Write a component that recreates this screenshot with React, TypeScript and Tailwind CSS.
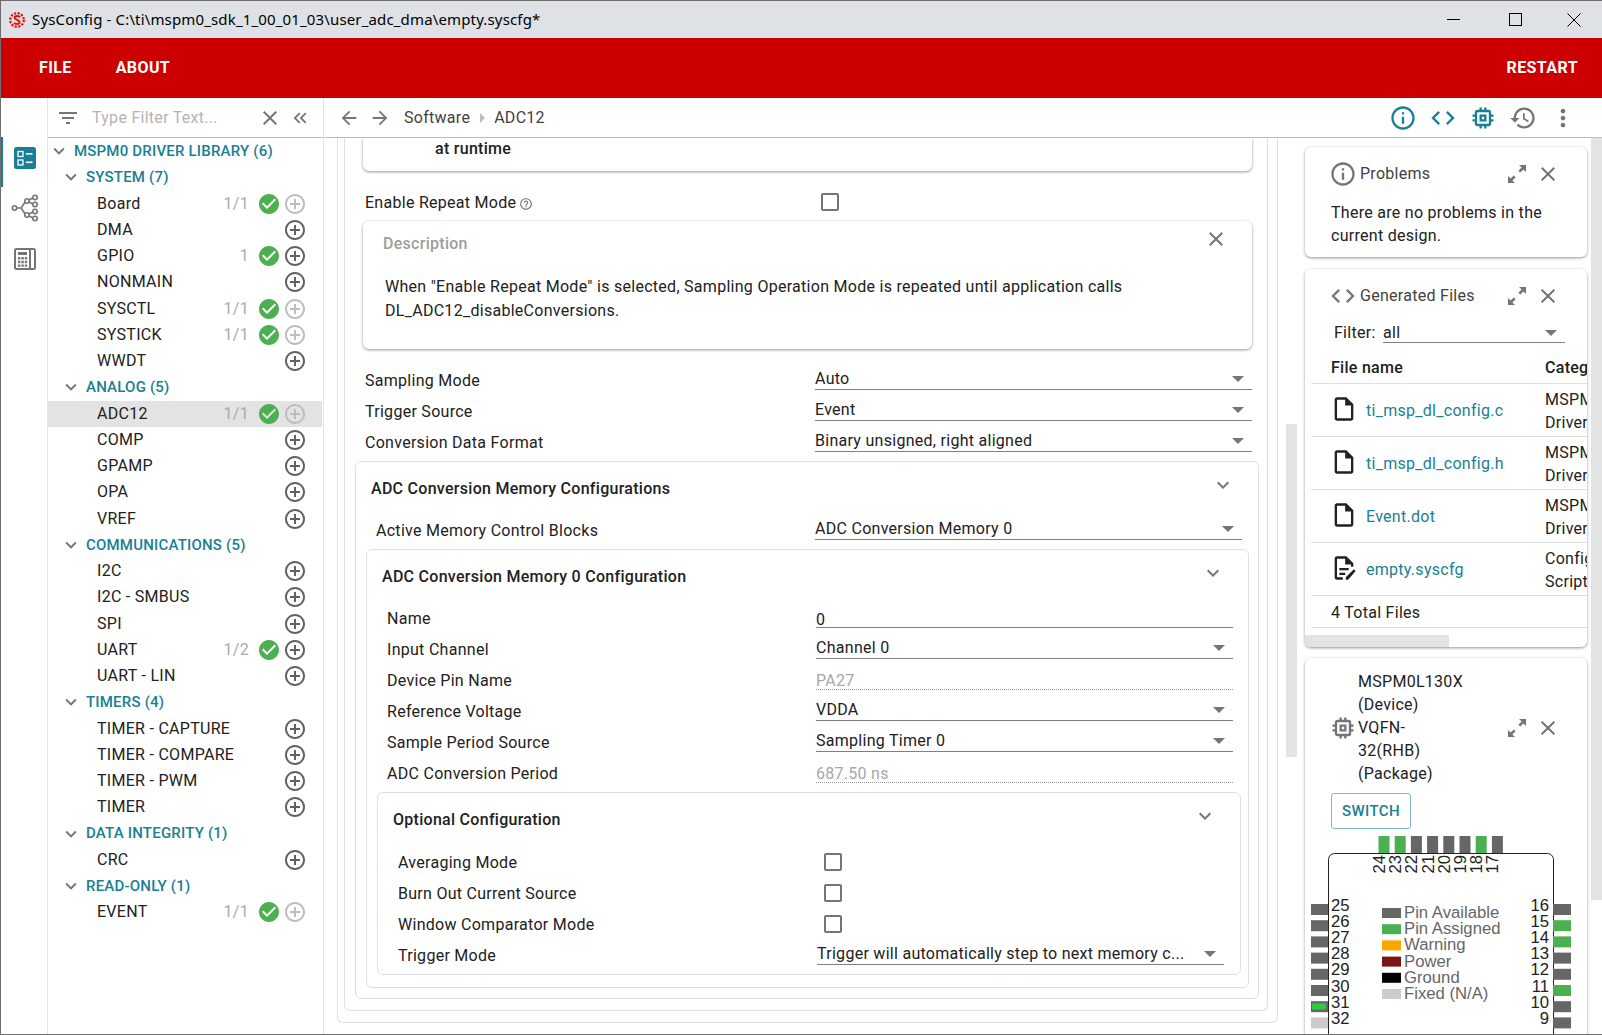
import React from 'react';

const P = {
  filter: 'M10 18h4v-2h-4v2zM3 6v2h18V6H3zm3 7h12v-2H6v2z',
  close: 'M19 6.41L17.59 5 12 10.59 6.41 5 5 6.41 10.59 12 5 17.59 6.41 19 12 13.41 17.59 19 19 17.59 13.41 12z',
  dbl: 'M17.59 18L19 16.59 14.42 12 19 7.41 17.59 6l-6 6zM11 18l1.41-1.41L7.83 12l4.58-4.59L11 6l-6 6z',
  chevron: 'M16.59 8.59L12 13.17 7.41 8.59 6 10l6 6 6-6z',
  check: 'M12 2C6.48 2 2 6.48 2 12s4.48 10 10 10 10-4.48 10-10S17.52 2 12 2zm-2 15l-5-5 1.41-1.41L10 14.17l7.59-7.59L19 8l-9 9z',
  add: 'M13 7h-2v4H7v2h4v4h2v-4h4v-2h-4V7zm-1-5C6.48 2 2 6.48 2 12s4.48 10 10 10 10-4.48 10-10S17.52 2 12 2zm0 18c-4.41 0-8-3.59-8-8s3.59-8 8-8 8 3.59 8 8-3.59 8-8 8z',
  info: 'M11 7h2v2h-2zm0 4h2v6h-2zm1-9C6.48 2 2 6.48 2 12s4.48 10 10 10 10-4.48 10-10S17.52 2 12 2zm0 18c-4.41 0-8-3.59-8-8s3.59-8 8-8 8 3.59 8 8-3.59 8-8 8z',
  code: 'M9.4 16.6L4.8 12l4.6-4.6L8 6l-6 6 6 6 1.4-1.4zm5.2 0l4.6-4.6-4.6-4.6L16 6l6 6-6 6-1.4-1.4z',
  memory: 'M15 9H9v6h6V9zm-2 4h-2v-2h2v2zm8-2V9h-2V7c0-1.1-.9-2-2-2h-2V3h-2v2h-2V3H9v2H7c-1.1 0-2 .9-2 2v2H3v2h2v2H3v2h2v2c0 1.1.9 2 2 2h2v2h2v-2h2v2h2v-2h2c1.1 0 2-.9 2-2v-2h2v-2h-2v-2h2zm-4 6H7V7h10v10z',
  history: 'M13 3c-4.97 0-9 4.03-9 9H1l3.89 3.89.07.14L9 12H6c0-3.87 3.13-7 7-7s7 3.13 7 7-3.13 7-7 7c-1.93 0-3.68-.79-4.94-2.06l-1.42 1.42C8.27 19.99 10.51 21 13 21c4.97 0 9-4.03 9-9s-4.03-9-9-9zm-1 5v5l4.28 2.54.72-1.21-3.5-2.08V8H12z',
  more: 'M12 8c1.1 0 2-.9 2-2s-.9-2-2-2-2 .9-2 2 .9 2 2 2zm0 2c-1.1 0-2 .9-2 2s.9 2 2 2 2-.9 2-2-.9-2-2-2zm0 6c-1.1 0-2 .9-2 2s.9 2 2 2 2-.9 2-2-.9-2-2-2z',
  back: 'M20 11H7.83l5.59-5.59L12 4l-8 8 8 8 1.41-1.41L7.83 13H20v-2z',
  forward: 'M12 4l-1.41 1.41L16.17 11H4v2h12.17l-5.58 5.59L12 20l8-8z',
  expand: 'M14 3h7v7l-2.6-2.6-3.2 3.2-1.8-1.8 3.2-3.2zM10 21H3v-7l2.6 2.6 3.2-3.2 1.8 1.8-3.2 3.2z',
  file: 'M14 2H6c-1.1 0-2 .9-2 2v16c0 1.1.9 2 2 2h12c1.1 0 2-.9 2-2V8l-6-6zm4 18H6V4h7v5h5v11z',
  script: 'M14 2H6c-1.1 0-2 .9-2 2v16c0 1.1.9 2 2 2h5v-2H6V4h7v5h5v2h2V8l-6-6zM8 12h8v2H8zm0 4h5v2H8zM22 14.5l-1.5-1.5-7 7V22h2z',
  help: 'M11 18h2v-2h-2v2zm1-16C6.48 2 2 6.48 2 12s4.48 10 10 10 10-4.48 10-10S17.52 2 12 2zm0 18c-4.41 0-8-3.59-8-8s3.59-8 8-8 8 3.59 8 8-3.59 8-8 8zm0-14c-2.21 0-4 1.79-4 4h2c0-1.1.9-2 2-2s2 .9 2 2c0 2-3 1.75-3 5h2c0-2.25 3-2.5 3-5 0-2.21-1.79-4-4-4z',
};

const Icon = ({ d, className }: { d: string; className: string }) => (
  <svg viewBox="0 0 24 24" fill="currentColor" className={className}>
    <path d={d} />
  </svg>
);

type Item = { label: string; count?: string; check?: boolean; dim?: boolean; selected?: boolean };
type Group = { title: string; items: Item[] };

const groups: Group[] = [
  {
    title: 'SYSTEM (7)',
    items: [
      { label: 'Board', count: '1/1', check: true, dim: true },
      { label: 'DMA' },
      { label: 'GPIO', count: '1', check: true },
      { label: 'NONMAIN' },
      { label: 'SYSCTL', count: '1/1', check: true, dim: true },
      { label: 'SYSTICK', count: '1/1', check: true, dim: true },
      { label: 'WWDT' },
    ],
  },
  {
    title: 'ANALOG (5)',
    items: [
      { label: 'ADC12', count: '1/1', check: true, dim: true, selected: true },
      { label: 'COMP' },
      { label: 'GPAMP' },
      { label: 'OPA' },
      { label: 'VREF' },
    ],
  },
  {
    title: 'COMMUNICATIONS (5)',
    items: [
      { label: 'I2C' },
      { label: 'I2C - SMBUS' },
      { label: 'SPI' },
      { label: 'UART', count: '1/2', check: true },
      { label: 'UART - LIN' },
    ],
  },
  {
    title: 'TIMERS (4)',
    items: [
      { label: 'TIMER - CAPTURE' },
      { label: 'TIMER - COMPARE' },
      { label: 'TIMER - PWM' },
      { label: 'TIMER' },
    ],
  },
  { title: 'DATA INTEGRITY (1)', items: [{ label: 'CRC' }] },
  { title: 'READ-ONLY (1)', items: [{ label: 'EVENT', count: '1/1', check: true, dim: true }] },
];

const TreeItem = ({ item }: { item: Item }) => (
  <div className={`mr-[1px] flex h-[26.25px] items-center pl-[49px] ${item.selected ? 'bg-[#e3e3e3]' : ''}`}>
    <span className="flex-1 whitespace-nowrap text-[#212121]">{item.label}</span>
    <span className="w-[40px] text-right text-[#aaaaaa]">{item.count}</span>
    <span className="ml-[8px] flex w-[24px] justify-center">
      {item.check && <Icon d={P.check} className="h-[24px] w-[24px] text-[#4caf50]" />}
    </span>
    <span className="ml-[2px] mr-[15px] flex w-[24px] justify-center">
      <Icon d={P.add} className={`h-[24px] w-[24px] ${item.dim ? 'text-[#bdbdbd]' : 'text-[#616161]'}`} />
    </span>
  </div>
);

const TreeGroup = ({ group }: { group: Group }) => (
  <div>
    <div className="flex h-[26.25px] items-center pl-[12px] text-[15px] font-medium tracking-[0.2px] text-[#187f94]">
      <Icon d={P.chevron} className="mr-[4px] h-[22px] w-[22px] text-[#757575]" />
      {group.title}
    </div>
    {group.items.map((it) => (
      <TreeItem key={it.label} item={it} />
    ))}
  </div>
);

const Select = ({ value, width, plain }: { value: string; width: string; plain?: boolean }) => (
  <div className={`flex h-[23px] items-center justify-between border-b-[1.5px] border-[#808080] pr-[8px] text-[#212121] ${plain ? 'pt-[7px]' : 'pt-[2px]'} ${width}`}>
    <span>{value}</span>
    {!plain && <span className="h-0 w-0 border-x-[6px] border-t-[6px] border-x-transparent border-t-[#757575]" />}
  </div>
);

const ReadOnly = ({ value }: { value: string }) => (
  <div className="flex h-[23px] w-[417px] items-center border-b border-dotted border-[#9e9e9e] pt-[6px] text-[#a8a8a8]">{value}</div>
);

const Row = ({ label, labelWidth, children }: { label: string; labelWidth: string; children: React.ReactNode }) => (
  <div className="flex h-[31px] items-end">
    <div className={`-mb-[2px] pl-[20px] leading-[22px] text-[#212121] ${labelWidth}`}>{label}</div>
    {children}
  </div>
);

const Checkbox = () => <div className="mb-[1px] h-[18px] w-[18px] rounded-[2px] border-2 border-[#757575]" />;

const SectionHead = ({ title }: { title: string }) => (
  <div className="flex h-[47px] items-start justify-between pl-[15px] pr-[23px]">
    <span className="mt-[15px] font-medium text-[#212121]">{title}</span>
    <Icon d={P.chevron} className="mt-[11px] h-[24px] w-[24px] text-[#757575]" />
  </div>
);

const cardShadow = 'rounded-md bg-white shadow-[0_1px_3px_rgba(0,0,0,0.42)]';

const PanelActions = () => (
  <div className="ml-auto mr-[27px] flex items-center gap-[7px] text-[#757575]">
    <Icon d={P.expand} className="h-[24px] w-[24px]" />
    <Icon d={P.close} className="h-[24px] w-[24px]" />
  </div>
);

const files = [
  { name: 'ti_msp_dl_config.c', icon: P.file, cat: ['MSPM0', 'Driver'] },
  { name: 'ti_msp_dl_config.h', icon: P.file, cat: ['MSPM0', 'Driver'] },
  { name: 'Event.dot', icon: P.file, cat: ['MSPM0', 'Driver'] },
  { name: 'empty.syscfg', icon: P.script, cat: ['Config', 'Script'] },
];

const DeviceDiagram = () => {
  const green = '#4caf50';
  const gray = '#666666';
  const top = [green, green, gray, gray, gray, gray, green, gray];
  const left = [gray, gray, gray, gray, gray, gray, gray, '#cccccc'];
  const right = [gray, green, green, gray, gray, green, gray, gray];
  const legend = [
    ['#666666', 'Pin Available'],
    ['#4caf50', 'Pin Assigned'],
    ['#ffa500', 'Warning'],
    ['#7b1515', 'Power'],
    ['#000000', 'Ground'],
    ['#cccccc', 'Fixed (N/A)'],
  ];
  return (
    <svg width="282" height="200" viewBox="1305 836 282 200" className="block font-['Liberation_Sans',sans-serif] tracking-normal">
      <rect x="1328.5" y="853.5" width="225" height="200" rx="6" fill="white" stroke="#222" strokeWidth="1" />
      {top.map((c, i) => (
        <rect key={i} x={1378.5 + i * 16.2} y="836" width="11" height="17" fill={c} />
      ))}
      {top.map((_, i) => (
        <text key={i} transform={`translate(${1385 + i * 16.2} 873.5) rotate(-90)`} fontSize="16.7" fill="#222">
          {24 - i}
        </text>
      ))}
      {left.map((c, i) => (
        <rect key={i} x="1311" y={904 + i * 16.2} width="17" height="11" fill={c} />
      ))}
      <rect x="1312" y="1003.5" width="14" height="6" fill="#2ecc40" />
      {left.map((_, i) => (
        <text key={i} x="1331" y={910.5 + i * 16.2} fontSize="16.7" fill="#222">
          {25 + i}
        </text>
      ))}
      {right.map((c, i) => (
        <rect key={i} x="1553" y={904 + i * 16.2} width="18" height="11" fill={c} />
      ))}
      {right.map((_, i) => (
        <text key={i} x="1549" y={910.5 + i * 16.2} fontSize="16.7" fill="#222" textAnchor="end">
          {16 - i}
        </text>
      ))}
      {legend.map(([c, t], i) => (
        <g key={t}>
          <rect x="1382" y={908 + i * 16.2} width="19" height="10" fill={c} />
          <text x="1404" y={918 + i * 16.2} fontSize="16.7" fill="#666666">
            {t}
          </text>
        </g>
      ))}
    </svg>
  );
};

export default function App() {
  return (
    <div className="box-border flex h-[1035px] w-[1602px] flex-col overflow-hidden border-y border-l border-[#6e6e6e] bg-white font-['Roboto',sans-serif] text-[16px] tracking-[0.28px] text-[#212121]">
      {/* window title */}
      <div className="flex h-[37px] shrink-0 items-center bg-[#dee1e6] pl-[8px] font-['Noto_Sans',sans-serif] text-[15px] tracking-[0.15px] text-black">
        <svg viewBox="0 0 16 20" className="mr-[7px] h-[20px] w-[16px]" fill="none" stroke="#e01010">
          <circle cx="8" cy="10" r="6.8" strokeWidth="2.2" strokeDasharray="2.2 1.4" />
          <path d="M11 7.2c-1-1.5-5.2-1.6-5.4.4C5.4 10 10.8 9.8 10.6 12.4c-.2 2-4.6 1.8-5.6.4" strokeWidth="2" />
        </svg>
        <span>SysConfig - C:\ti\mspm0_sdk_1_00_01_03\user_adc_dma\empty.syscfg*</span>
        <div className="ml-auto flex items-center">
          <div className="h-px w-[13px] bg-black" />
          <div className="ml-[49px] h-[13px] w-[13px] border border-black" />
          <svg viewBox="0 0 14 14" className="ml-[45px] mr-[21px] h-[14px] w-[14px]" stroke="black" strokeWidth="1">
            <path d="M0.5 0.5l13 13M13.5 0.5l-13 13" />
          </svg>
        </div>
      </div>

      {/* red app bar */}
      <div className="flex h-[60px] shrink-0 items-center bg-[#cc0000] pl-[38px] pr-[24px] font-bold tracking-[0.4px] text-white">
        <span>FILE</span>
        <span className="ml-[44px]">ABOUT</span>
        <span className="ml-auto">RESTART</span>
      </div>

      <div className="flex min-h-0 flex-1">
        {/* icon rail */}
        <div className="flex w-[46px] shrink-0 flex-col">
          <div className="mt-[39px] flex h-[50px] items-center justify-center border-l-[2px] border-[#187f94] pb-[8px]">
            <svg viewBox="0 0 22 22" className="h-[22px] w-[22px]">
              <rect width="22" height="22" rx="2.5" fill="#187f94" />
              <rect x="4" y="4.5" width="5" height="5" fill="none" stroke="white" strokeWidth="1.3" />
              <rect x="4" y="13" width="5" height="5" fill="none" stroke="white" strokeWidth="1.3" />
              <rect x="12" y="6" width="6.5" height="1.6" fill="white" />
              <rect x="12" y="14.5" width="6.5" height="1.6" fill="white" />
            </svg>
          </div>
          <div className="mt-[3px] flex h-[36px] items-center justify-center pl-[2px]">
            <svg viewBox="0 0 28 28" className="h-[28px] w-[28px]" fill="none" stroke="#757575" strokeWidth="1.6">
              <circle cx="3.5" cy="14" r="2.2" />
              <circle cx="24" cy="3.5" r="2.2" />
              <circle cx="24" cy="10.5" r="2.2" />
              <circle cx="24" cy="17.5" r="2.2" />
              <circle cx="24" cy="24.5" r="2.2" />
              <circle cx="16" cy="7" r="2.2" />
              <circle cx="16" cy="21" r="2.2" />
              <path d="M5.7 14L10 14M10 14L14 8.2M10 14L14 19.8M18 6L22 3.8M18 8L22 10M18 20L22 18M18 22L22 24" />
            </svg>
          </div>
          <div className="mt-[21px] flex h-[24px] items-center justify-center pl-[2px]">
            <svg viewBox="0 0 22 22" className="h-[22px] w-[22px]" fill="#757575">
              <path d="M2.5 0h17A2.5 2.5 0 0 1 22 2.5v17a2.5 2.5 0 0 1-2.5 2.5h-17A2.5 2.5 0 0 1 0 19.5v-17A2.5 2.5 0 0 1 2.5 0zM2 2v18h13V2zm15 0v18h3V2zM4 4h9v3H4zM4 9h2.4v2.4H4zm3.4 0h2.4v2.4H7.4zm3.4 0h2.4v2.4h-2.4zM4 12.8h2.4v2.4H4zm3.4 0h2.4v2.4H7.4zm3.4 0h2.4v2.4h-2.4zM4 16.4h2.4v2.4H4zm3.4 0h2.4v2.4H7.4zm3.4 0h2.4v2.4h-2.4z" fillRule="evenodd" />
            </svg>
          </div>
        </div>

        {/* tree */}
        <div className="flex w-[277px] shrink-0 flex-col border-x border-[#e4e4e4]">
          <div className="flex h-[40px] shrink-0 items-center border-b border-[#bdbdbd] pl-[8px] pr-[12px] text-[#757575]">
            <Icon d={P.filter} className="h-[24px] w-[24px]" />
            <span className="ml-[12px] text-[#b4b4b4]">Type Filter Text...</span>
            <Icon d={P.close} className="ml-auto h-[24px] w-[24px]" />
            <Icon d={P.dbl} className="ml-[7px] h-[22px] w-[22px]" />
          </div>
          <div className="flex h-[26.25px] items-center text-[15px] font-medium tracking-[0.2px] text-[#187f94]">
            <Icon d={P.chevron} className="mr-[4px] h-[22px] w-[22px] text-[#757575]" />
            MSPM0 DRIVER LIBRARY (6)
          </div>
          {groups.map((g) => (
            <TreeGroup key={g.title} group={g} />
          ))}
        </div>

        <div className="flex min-w-0 flex-1 flex-col">
          {/* toolbar */}
          <div className="flex h-[40px] shrink-0 items-center border-b border-[#bdbdbd] pl-[14px] text-[#424242]">
            <Icon d={P.back} className="h-[22px] w-[22px] text-[#757575]" />
            <Icon d={P.forward} className="ml-[9px] h-[22px] w-[22px] text-[#757575]" />
            <span className="ml-[13px]">Software</span>
            <span className="ml-[10px] h-0 w-0 border-y-[5px] border-l-[5px] border-y-transparent border-l-[#bdbdbd]" />
            <span className="ml-[9px]">ADC12</span>
            <div className="ml-auto mr-[25px] flex items-center gap-[12px]">
              <Icon d={P.info} className="h-[28px] w-[28px] text-[#187f94]" />
              <Icon d={P.code} className="h-[28px] w-[28px] text-[#187f94]" />
              <Icon d={P.memory} className="h-[28px] w-[28px] text-[#187f94]" />
              <Icon d={P.history} className="h-[28px] w-[28px] text-[#757575]" />
              <Icon d={P.more} className="h-[28px] w-[28px] text-[#757575]" />
            </div>
          </div>

          <div className="flex min-h-0 flex-1">
            {/* configuration */}
            <div className="w-[962px] shrink-0 overflow-hidden pl-[13px]">
              <div className="w-[941px] rounded-b-md border-x border-b border-[#e0e0e0] pb-[11px]">
                <div className="ml-[6px] w-[924px] rounded-b-md border-x border-b border-[#e0e0e0] pb-[11px]">
                  <div className={`ml-[18px] h-[33px] w-[889px] pl-[72px] font-medium leading-[22px] ${cardShadow} rounded-t-none`}>at runtime</div>
                  <div className="flex h-[50px] items-center pt-[12px]">
                    <div className="mt-[2px] flex w-[476px] items-center pl-[20px]">
                      Enable Repeat Mode
                      <Icon d={P.help} className="ml-[3px] mt-[2px] h-[14px] w-[14px] text-[#757575]" />
                    </div>
                    <div className="h-[18px] w-[18px] rounded-[2px] border-2 border-[#757575]" />
                  </div>
                  <div className={`relative ml-[18px] h-[128px] w-[889px] ${cardShadow}`}>
                    <div className="pl-[20px] pt-[11px] font-medium text-[#9e9e9e]">Description</div>
                    <Icon d={P.close} className="absolute right-[24px] top-[6px] h-[24px] w-[24px] text-[#757575]" />
                    <div className="mt-[19px] w-[800px] pl-[22px] leading-[23.5px]">
                      When "Enable Repeat Mode" is selected, Sampling Operation Mode is repeated until application calls DL_ADC12_disableConversions.
                    </div>
                  </div>
                  <div className="mt-[10px]">
                    <Row label="Sampling Mode" labelWidth="w-[470px]"><Select value="Auto" width="w-[437px]" /></Row>
                    <Row label="Trigger Source" labelWidth="w-[470px]"><Select value="Event" width="w-[437px]" /></Row>
                    <Row label="Conversion Data Format" labelWidth="w-[470px]"><Select value="Binary unsigned, right aligned" width="w-[437px]" /></Row>
                  </div>

                  <div className="ml-[10px] mt-[9px] w-[904px] rounded-md border border-[#e0e0e0] pb-[10px]">
                    <SectionHead title="ADC Conversion Memory Configurations" />
                    <Row label="Active Memory Control Blocks" labelWidth="w-[459px]"><Select value="ADC Conversion Memory 0" width="w-[427px]" /></Row>
                    <div className="ml-[10px] mt-[9px] w-[883px] rounded-md border border-[#e0e0e0] pb-[12px]">
                      <SectionHead title="ADC Conversion Memory 0 Configuration" />
                      <Row label="Name" labelWidth="w-[449px]"><Select value="0" width="w-[417px]" plain /></Row>
                      <Row label="Input Channel" labelWidth="w-[449px]"><Select value="Channel 0" width="w-[417px]" /></Row>
                      <Row label="Device Pin Name" labelWidth="w-[449px]"><ReadOnly value="PA27" /></Row>
                      <Row label="Reference Voltage" labelWidth="w-[449px]"><Select value="VDDA" width="w-[417px]" /></Row>
                      <Row label="Sample Period Source" labelWidth="w-[449px]"><Select value="Sampling Timer 0" width="w-[417px]" /></Row>
                      <Row label="ADC Conversion Period" labelWidth="w-[449px]"><ReadOnly value="687.50 ns" /></Row>
                      <div className="ml-[10px] mt-[9px] w-[864px] rounded-md border border-[#e0e0e0] pb-[9px]">
                        <SectionHead title="Optional Configuration" />
                        <div className="pt-[1px]">
                          <Row label="Averaging Mode" labelWidth="w-[446px]"><Checkbox /></Row>
                          <Row label="Burn Out Current Source" labelWidth="w-[446px]"><Checkbox /></Row>
                          <Row label="Window Comparator Mode" labelWidth="w-[446px]"><Checkbox /></Row>
                          <Row label="Trigger Mode" labelWidth="w-[439px]">
                            <Select value="Trigger will automatically step to next memory c..." width="w-[407px]" />
                          </Row>
                        </div>
                      </div>
                    </div>
                  </div>
                </div>
              </div>
              <div className="mt-[11px] h-[10px] w-[941px] rounded-t-md border-x border-t border-[#e0e0e0]" />
            </div>

            {/* thumb of the middle scroll bar */}
            <div className="w-[12px] shrink-0 pt-[286px]">
              <div className="h-[333px] w-[11px] bg-[#e3e3e3]" />
            </div>

            {/* right column */}
            <div className="flex min-w-0 flex-1 overflow-hidden">
              <div className="w-[293px] shrink-0 overflow-hidden pl-[7px] pt-[9px]">
                <div className={`h-[110px] w-[282px] ${cardShadow}`}>
                  <div className="flex h-[54px] items-center pl-[26px]">
                    <Icon d={P.info} className="-ml-[2px] mr-[3px] h-[28px] w-[28px] text-[#757575]" />
                    <span className="text-[#424242]">Problems</span>
                    <PanelActions />
                  </div>
                  <div className="pl-[26px] pr-[20px] leading-[23px]">There are no problems in the current design.</div>
                </div>

                <div className={`mt-[12px] h-[378px] w-[282px] overflow-hidden ${cardShadow}`}>
                  <div className="flex h-[54px] items-center pl-[24px]">
                    <Icon d={P.code} className="mr-[3px] h-[28px] w-[28px] text-[#757575]" />
                    <span className="text-[#424242]">Generated Files</span>
                    <PanelActions />
                  </div>
                  <div className="flex h-[20px] items-center pl-[29px]">
                    <span className="w-[49px]">Filter:</span>
                    <div className="flex h-[20px] w-[182px] items-center justify-between border-b-[1.5px] border-[#808080] pr-[8px]">
                      <span>all</span>
                      <span className="h-0 w-0 border-x-[6px] border-t-[6px] border-x-transparent border-t-[#757575]" />
                    </div>
                  </div>
                  <div className="ml-[6px] flex h-[41px] items-center whitespace-nowrap border-b border-[#e0e0e0] pl-[20px] pt-[10px] font-medium">
                    <span className="w-[214px] shrink-0">File name</span>
                    <span className="shrink-0">Category</span>
                  </div>
                  {files.map((f) => (
                    <div key={f.name} className="ml-[6px] flex h-[53px] items-center whitespace-nowrap border-b border-[#e0e0e0] pl-[19px] pt-[2px]">
                      <Icon d={f.icon} className="h-[28px] w-[28px] shrink-0 -translate-y-[2px] text-[#212121]" />
                      <span className="ml-[8px] w-[179px] shrink-0 text-[#187f94]">{f.name}</span>
                      <span className="shrink-0 leading-[23px]">
                        {f.cat[0]}
                        <br />
                        {f.cat[1]}
                      </span>
                    </div>
                  ))}
                  <div className="ml-[6px] flex h-[32px] items-center border-b border-[#e0e0e0] pl-[20px] pt-[2px]">4 Total Files</div>
                  <div className="mt-[7px] h-[12px] w-[144px] bg-[#e3e3e3]" />
                </div>

                <div className={`mt-[11px] h-[420px] w-[282px] pt-[12px] ${cardShadow}`}>
                  <div className="flex items-center pl-[24px]">
                    <Icon d={P.memory} className="h-[28px] w-[28px] shrink-0 text-[#757575]" />
                    <div className="ml-[1px] w-[107px] leading-[23px]">MSPM0L130X (Device) VQFN-32(RHB) (Package)</div>
                    <PanelActions />
                  </div>
                  <button className="ml-[26px] mt-[8px] h-[36px] w-[80px] rounded-[3px] border border-[#7fb8c4] text-[15px] font-medium tracking-[0.4px] text-[#187f94]">
                    SWITCH
                  </button>
                  <div className="mt-[7px]">
                    <DeviceDiagram />
                  </div>
                </div>
              </div>
              <div className="h-[762px] w-[11px] shrink-0 bg-[#e3e3e3]" />
            </div>
          </div>
        </div>
      </div>
    </div>
  );
}
